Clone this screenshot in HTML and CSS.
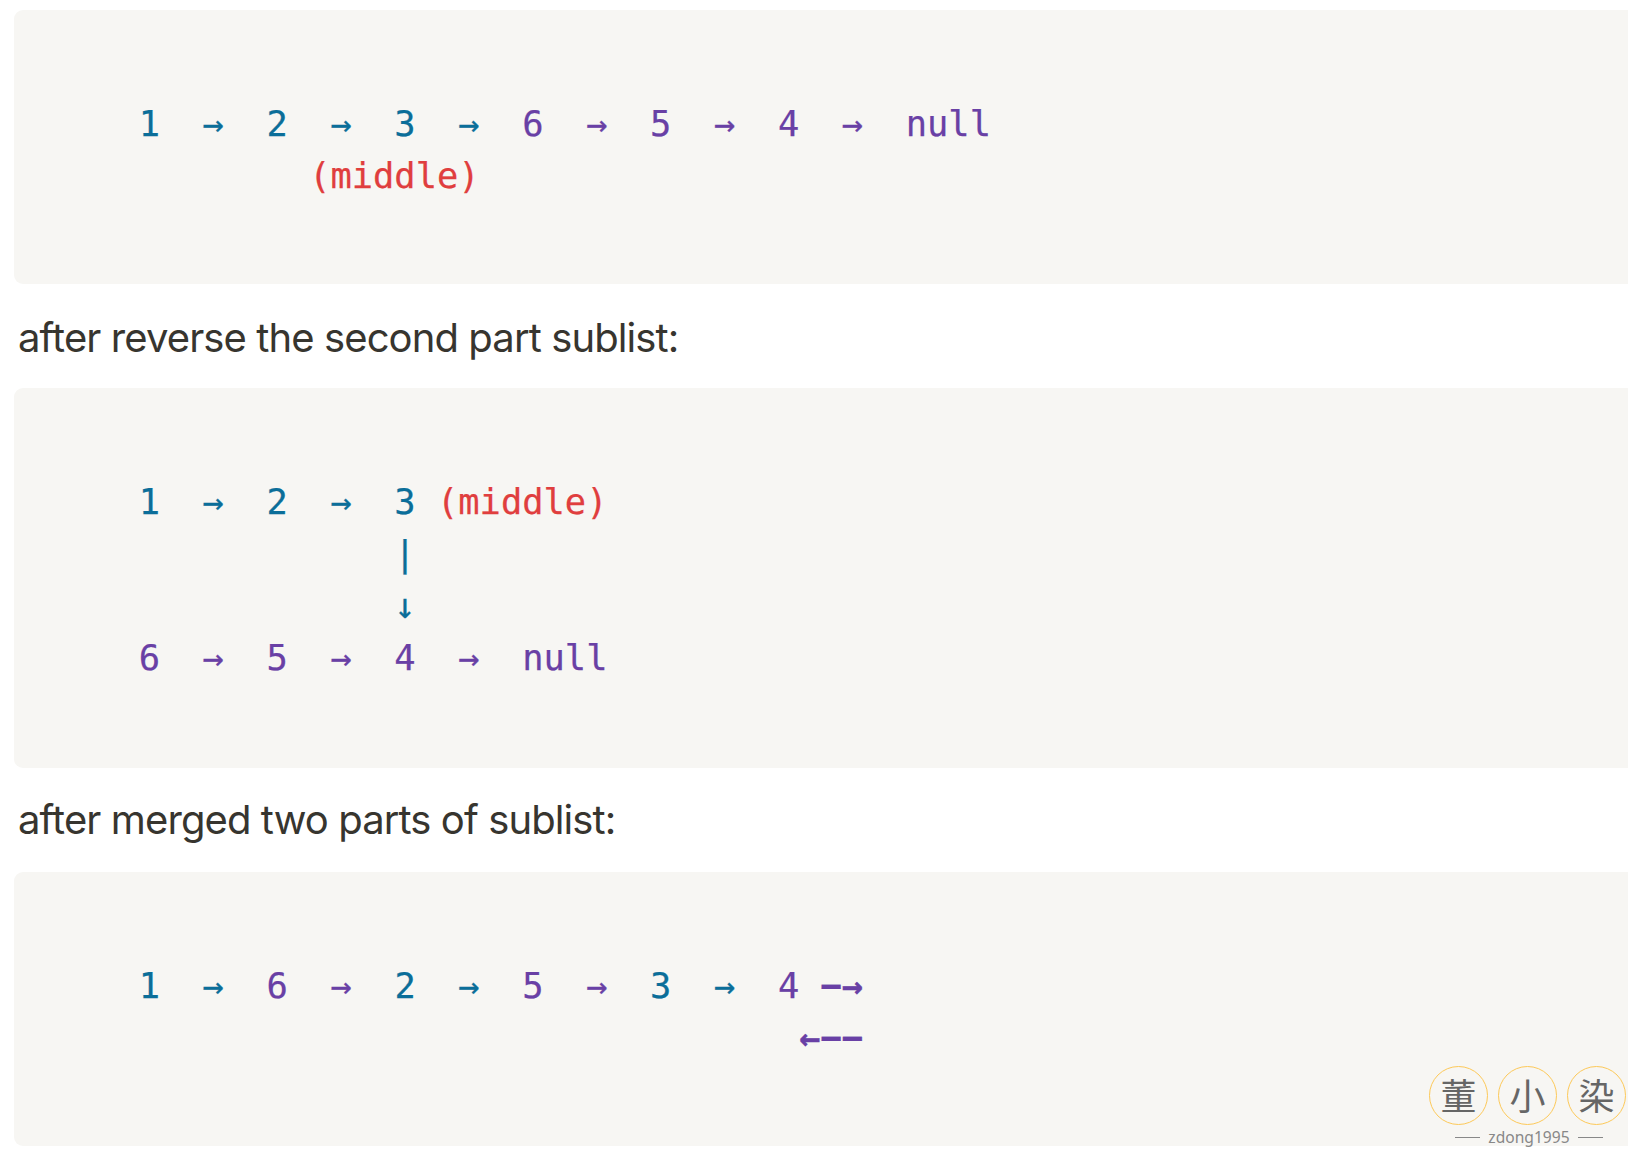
FILE: index.html
```html
<!DOCTYPE html>
<html lang="en">
<head>
<meta charset="utf-8">
<title>Reorder list</title>
<link rel="stylesheet" href="styles.css">
</head>
<body>
<main class="page">
<pre class="code"><span class="t">1  →  2  →  3  →  </span><span class="p">6  →  5  →  4  →  null</span>
<span class="r">        (middle)</span></pre>
<p class="text">after reverse the second part sublist:</p>
<pre class="code code-tall"><span class="t">1  →  2  →  3 </span><span class="r">(middle)</span>
<span class="t">            |</span>
<span class="t">            ↓</span>
<span class="p">6  →  5  →  4  →  null</span></pre>
<p class="text text-tight">after merged two parts of sublist:</p>
<pre class="code"><span class="t">1  →  </span><span class="p">6  →  </span><span class="t">2  →  </span><span class="p">5  →  </span><span class="t">3  →  </span><span class="p">4 <b class="d">−→</b></span>
<span class="p">                               <b class="d">←−−</b></span></pre>
</main>
<aside class="mark">
<div class="seals"><span class="seal">董</span><span class="seal">小</span><span class="seal">染</span></div>
<div class="caption"><i class="rule"></i><span>zdong1995</span><i class="rule"></i></div>
</aside>
</body>
</html>
```
FILE: styles.css
```css
html, body { margin: 0; background: #fff; overflow: hidden; }
.page { padding: 10px 0 0 14px; width: 1700px; }
.code {
  margin: 0;
  padding: 88px 20px 82px 124.7px;
  background: #f7f6f3;
  border-radius: 9px;
  font-family: "DejaVu Sans Mono", monospace;
  font-size: 35.4px;
  line-height: 52px;
  -webkit-text-stroke: 0.25px;
}
.code-tall { padding-bottom: 84px; }
.t { color: #0b6e99; }
.p { color: #6940a5; }
.r { color: #e03e3e; }
.d { font-weight: 700; }
.text {
  margin: 0;
  padding: 27px 0 0 4px;
  height: 104px;
  box-sizing: border-box;
  font-family: Inter, "Liberation Sans", sans-serif;
  font-size: 40px;
  line-height: 54px;
  color: #37352f;
  letter-spacing: -0.9px;
}
.text-tight { padding-top: 25px; }
.mark { position: absolute; left: 1429px; top: 1066px; width: 199px; }
.seals { display: flex; gap: 10px; }
.seal {
  width: 59px; height: 59px;
  box-sizing: border-box;
  border: 1.5px solid #fdc959;
  border-radius: 50%;
  padding-bottom: 4px;
  display: flex; align-items: center; justify-content: center;
  font-family: "Noto Sans CJK SC", sans-serif;
  font-size: 36px;
  line-height: 50px;
  color: #666;
}
.caption {
  display: flex; align-items: center; justify-content: center; gap: 8px;
  width: 150px; margin-left: 25px;
  font-family: "Noto Sans", sans-serif;
  font-size: 15.6px;
  line-height: 24px;
  color: #888;
}
.rule { width: 25px; height: 1px; background: #888; }
```
